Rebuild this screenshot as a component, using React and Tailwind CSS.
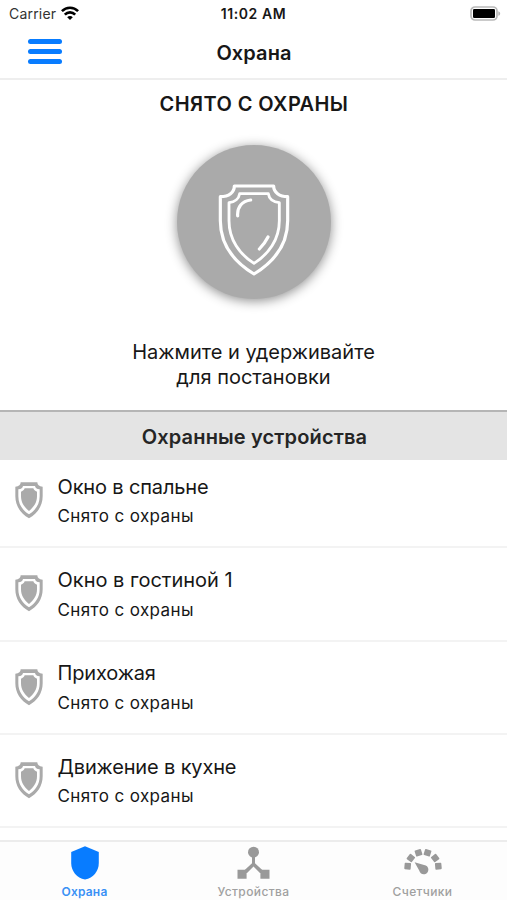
const DEVICES = ['Окно в спальне', 'Окно в гостиной 1', 'Прихожая', 'Движение в кухне']

function WifiIcon() {
  return (
    <svg className="w-[18px] h-[14px]" viewBox="0 0 18 14" fill="none" stroke="#000" strokeWidth="2.6">
      <path d="M0.9 5.2C5.4 0.6 12.6 0.6 17.1 5.2" />
      <path d="M3.8 8.6C6.7 5.6 11.3 5.6 14.2 8.6" />
      <path d="M9 14L6.2 11.2C7.8 9.7 10.2 9.7 11.8 11.2Z" fill="#000" stroke="none" />
    </svg>
  )
}

function BatteryIcon() {
  return (
    <svg className="w-[31px] h-[15px]" viewBox="0 0 31 15">
      <rect x="1" y="1" width="26" height="13" rx="4" fill="#fff" stroke="#b9b9b9" strokeWidth="1.7" />
      <rect x="3" y="3" width="22" height="9" rx="1.2" fill="#000" />
      <path d="M28.3 5.2C30.8 6 30.8 9 28.3 9.8Z" fill="#b5b5b5" />
    </svg>
  )
}

function ShieldOutline() {
  return (
    <svg className="w-[74px] h-[94px]" viewBox="158 162 222 282" fill="none" stroke="#fff" strokeWidth="9.5" strokeLinejoin="round">
      <path d="M210 171H328C328 190 345 203 370 203V275C370 348 330 398 269 435C208 398 168 348 168 275V203C194 203 210 190 210 171Z" />
      <path d="M226 194H312C314 208 326 219 345 221V275C345 332 312 376 269 403C226 376 194 332 194 275V221C212 219 224 208 226 194Z" strokeWidth="8.5" />
      <path d="M220 261C218 234 233 216 259 213M311 324C304 338 296 349 285 360" strokeLinecap="round" />
    </svg>
  )
}

function DeviceShield() {
  return (
    <svg className="-mt-0.5 h-[37px] w-7 shrink-0" viewBox="0 0 84 111" fill="#aaa">
      <path d="M17 1H67C67 9 72 13 83 14V43C83 72 67 95 42 109C17 95 1 72 1 43V14C12 13 17 9 17 1Z" />
      <path d="M24 12H60C61 17 65 21 74 22V43C74 68 61 85 42 97C23 85 10 68 10 43V22C19 21 23 17 24 12Z" fill="#fff" />
      <path d="M29 19H55C57 24 60 27 66 29V43C66 62 56 76 42 87C28 76 18 62 18 43V29C24 27 27 24 29 19Z" />
    </svg>
  )
}

function GuardIcon() {
  return (
    <svg className="w-7 h-[34px]" viewBox="0 0 28 34" fill="#087cff">
      <path d="M14 0.3L27.8 6V17C27.8 25 22.4 32 14 33.5C5.6 32 0.2 25 0.2 17V6Z" />
    </svg>
  )
}

function DevicesIcon() {
  return (
    <svg className="w-[33px] h-[34px]" viewBox="0 0 33 34" fill="#999">
      <circle cx="16.5" cy="6.2" r="5.5" />
      <path d="M15 10H18V17.3L28.5 27H23L16.5 20.5L10 27H4.5L15 17.3Z" />
      <path d="M0.5 23.7H9.6V32.7H0.5ZM23.4 23.7H32.5V32.7H23.4Z" />
    </svg>
  )
}

function MetersIcon() {
  return (
    <svg className="w-[38px] h-[34px]" viewBox="0 0 38 34" fill="#999">
      {[-85, -52, -17, 17, 52, 85].map(angle => (
        <rect key={angle} x="15.7" y="2.9" width="6.6" height="6.4" rx="0.8" transform={`rotate(${angle} 19 21.5)`} />
      ))}
      <path d="M10.6 16.2L21.8 19.6C25.6 21.2 25.2 27.4 20.7 28.3C17.5 28.7 16 27 15.2 24.6Z" />
    </svg>
  )
}

function Tab({ icon, label, active }) {
  return (
    <button className={`flex flex-1 flex-col items-center pt-1 ${active ? 'text-[#3a91f5]' : 'text-[#a0a0a0]'}`}>
      {icon}
      <span className={`mt-1 text-[12px] leading-[16px] ${active ? 'font-semibold tracking-[0.2px]' : 'font-medium tracking-[0.4px]'}`}>{label}</span>
    </button>
  )
}

export default function App() {
  return (
    <div className="flex h-[900px] w-[507px] flex-col overflow-hidden bg-white font-['Inter','Liberation_Sans',sans-serif] text-[#171717]">
      {/* Status bar */}
      <div className="grid h-[26px] shrink-0 grid-cols-3 items-center">
        <div className="flex items-center gap-[5px] pl-[9px] text-[14px] tracking-[0.2px] text-[#333]">
          Carrier
          <WifiIcon />
        </div>
        <div className="text-center text-[14px] font-semibold tracking-[0.55px]">11:02 AM</div>
        <div className="flex justify-end pr-1.5"><BatteryIcon /></div>
      </div>

      {/* Navigation */}
      <header className="grid h-[54px] shrink-0 grid-cols-3 items-center border-b-2 border-[#eee]">
        <button className="-mt-px ml-7 flex w-[34px] flex-col gap-[5px]" aria-label="Меню">
          <span className="h-[5px] rounded-full bg-[#087cff]" />
          <span className="h-[5px] rounded-full bg-[#087cff]" />
          <span className="h-[5px] rounded-full bg-[#087cff]" />
        </button>
        <h1 className="pt-px pl-px text-center text-[20px] font-semibold tracking-[0.1px]">Охрана</h1>
      </header>

      {/* Arming */}
      <section className="flex h-[330px] shrink-0 flex-col items-center pt-[9px]">
        <h2 className="pl-px text-[20px] leading-[30px] font-semibold tracking-[0.4px]">СНЯТО С ОХРАНЫ</h2>
        <button className="mt-[26px] flex h-[154px] w-[154px] items-center justify-center rounded-full bg-[#aaa] pt-4 shadow-[0_2px_12px_rgba(0,0,0,0.45)]" aria-label="Поставить на охрану">
          <ShieldOutline />
        </button>
        <p className="mt-[41px] text-center text-[20px] leading-[25px]">
          Нажмите и удерживайте
          <br />
          для постановки
        </p>
      </section>

      {/* Devices */}
      <h2 className="flex h-[50px] shrink-0 items-center justify-center border-t-2 border-[#b5b5b5] bg-[#e4e4e4] pt-0.5 pl-0.5 text-[20px] font-semibold tracking-[0.15px] text-[#252525]">
        Охранные устройства
      </h2>
      <ul className="-mt-[5px] h-[385px] shrink-0">
        {DEVICES.map(name => (
          <li key={name} className="flex h-[93.3px] items-center gap-[14.5px] border-b-2 border-[#f3f3f3] pt-0.5 pl-[15px]">
            <DeviceShield />
            <div>
              <div className={`text-[20px] leading-[28px] ${name.endsWith('1') ? '' : 'tracking-[-0.15px]'}`}>{name}</div>
              <div className="mt-[1.5px] text-[17px] leading-[28px] tracking-[0.4px]">Снято с охраны</div>
            </div>
          </li>
        ))}
      </ul>

      {/* Tabs */}
      <nav className="flex h-[61px] shrink-0 border-t-2 border-[#ececec] bg-[#fdfdfd]">
        <Tab icon={<GuardIcon />} label="Охрана" active />
        <Tab icon={<DevicesIcon />} label="Устройства" />
        <Tab icon={<MetersIcon />} label="Счетчики" />
      </nav>
    </div>
  )
}
